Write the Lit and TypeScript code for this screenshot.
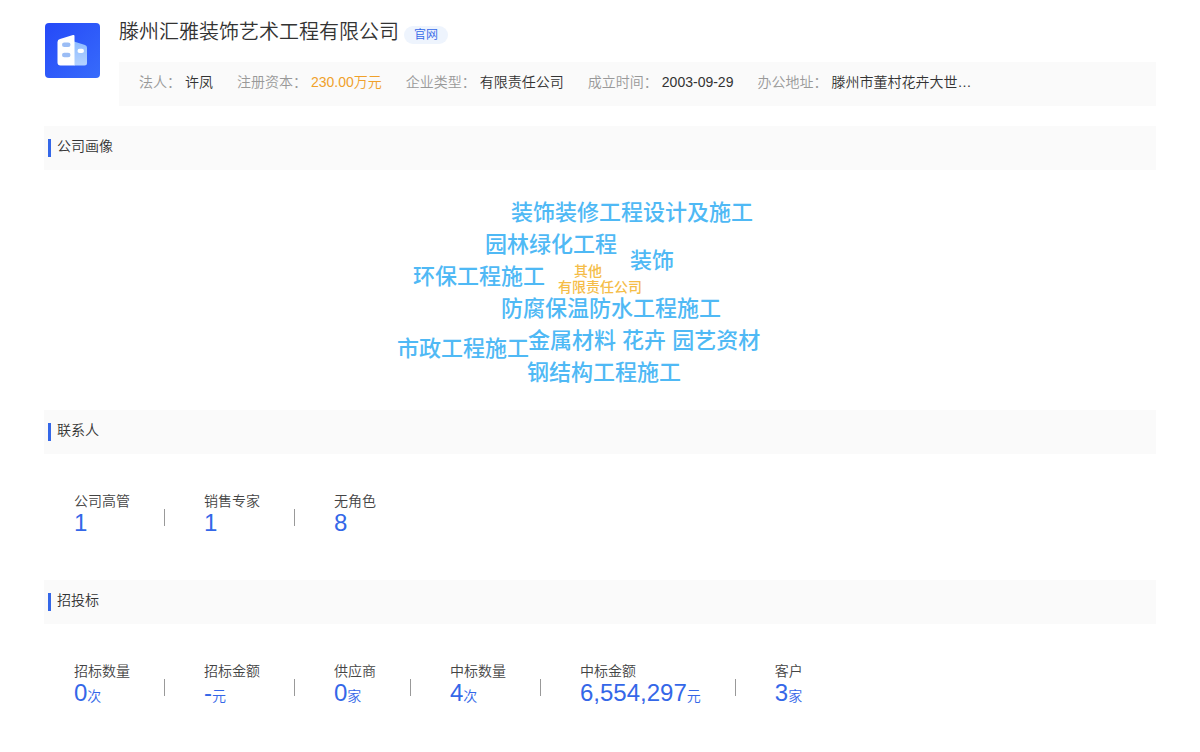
import { LitElement, html, css, svg } from "lit";
import { customElement, property } from "lit/decorators.js";
import { styleMap } from "lit/directives/style-map.js";

interface Stat {
  label: string;
  value: string;
  unit?: string;
}

interface Word {
  text: string;
  dx: number;
  y: number;
  minor?: boolean;
}

const facts = [
  { label: "法人", value: "许凤" },
  { label: "注册资本", value: "230.00万元", accent: true },
  { label: "企业类型", value: "有限责任公司" },
  { label: "成立时间", value: "2003-09-29" },
  { label: "办公地址", value: "滕州市董村花卉大世…" },
];

/* dx is measured from the middle of the cloud to the left edge of a word */
const words: Word[] = [
  { text: "装饰装修工程设计及施工", dx: -89, y: 43 },
  { text: "园林绿化工程", dx: -115, y: 75 },
  { text: "装饰", dx: 30, y: 91 },
  { text: "环保工程施工", dx: -187, y: 107 },
  { text: "其他", dx: -26, y: 101, minor: true },
  { text: "有限责任公司", dx: -42, y: 117, minor: true },
  { text: "防腐保温防水工程施工", dx: -99, y: 139 },
  { text: "金属材料 花卉 园艺资材", dx: -72, y: 171 },
  { text: "市政工程施工", dx: -203, y: 179 },
  { text: "钢结构工程施工", dx: -73, y: 203 },
];

const contacts: Stat[] = [
  { label: "公司高管", value: "1" },
  { label: "销售专家", value: "1" },
  { label: "无角色", value: "8" },
];

const bids: Stat[] = [
  { label: "招标数量", value: "0", unit: "次" },
  { label: "招标金额", value: "-", unit: "元" },
  { label: "供应商", value: "0", unit: "家" },
  { label: "中标数量", value: "4", unit: "次" },
  { label: "中标金额", value: "6,554,297", unit: "元" },
  { label: "客户", value: "3", unit: "家" },
];

const logo = svg`
  <defs>
    <linearGradient id="tile" x1="0" y1="0" x2="1" y2="1">
      <stop offset="0" stop-color="#2549f8" />
      <stop offset="1" stop-color="#376bfb" />
    </linearGradient>
    <linearGradient id="wing" x1="0" y1="0" x2="0" y2="1">
      <stop offset="0" stop-color="#8fbcff" />
      <stop offset="1" stop-color="#b4d2ff" />
    </linearGradient>
  </defs>
  <rect width="55" height="55" rx="4" fill="url(#tile)" />
  <path d="M29 18.500 L40 22 Q42 22.700 42 24.800 V40 Q42 42.500 39.500 42.500 H29 Z" fill="url(#wing)" />
  <path d="M15 16 Q12.500 16.700 12.500 19 V39.500 Q12.500 42.500 15.500 42.500 H29.500 V13 Q29.500 11.600 28 12.100 Z" fill="#fff" />
  <rect x="17" y="19.500" width="8.500" height="4.600" rx="2.300" fill="#9bbdf5" />
  <rect x="17" y="29.700" width="8.500" height="4.600" rx="2.300" fill="#9bbdf5" />
  <rect x="32.500" y="25.800" width="6.500" height="4.200" rx="2.100" fill="#fff" />
`;

@customElement("section-title")
export class SectionTitle extends LitElement {
  static styles = css`
    .bar {
      display: flex;
      align-items: center;
      gap: 6px;
      height: 44px;
      padding: 0 4px;
      background: #fafafa;
    }
    .mark {
      width: 3px;
      height: 18px;
      background: #3467e8;
    }
    .text {
      margin: 0;
      padding-bottom: 4px;
      font-size: 14px;
      line-height: 20px;
      font-weight: inherit;
      color: #333;
    }
    :host {
      display: block;
    }
  `;

  render() {
    return html`<div class="bar">
      <span class="mark"></span>
      <h2 class="text"><slot></slot></h2>
    </div>`;
  }
}

@customElement("stat-row")
export class StatRow extends LitElement {
  @property({ attribute: false }) stats: Stat[] = [];

  static styles = css`
    :host {
      display: block;
    }
    .row {
      display: flex;
      flex-wrap: wrap;
      margin: 0;
      padding: 36px 30px 40px;
    }
    .stat {
      display: flex;
      align-items: flex-start;
    }
    .stat + .stat::before {
      content: "";
      width: 1px;
      height: 17px;
      margin: 19px 39px 0 34px;
      background: #999;
    }
    .label {
      font-size: 14px;
      line-height: 22px;
      color: #444;
    }
    .value {
      margin: 0;
      padding-bottom: 6px;
      font-size: 24px;
      line-height: 22px;
      color: #3467e8;
    }
    .unit {
      font-size: 14px;
    }
  `;

  render() {
    return html`<dl class="row">
      ${this.stats.map(
        (s) => html`<div class="stat">
          <div>
            <dt class="label">${s.label}</dt>
            <dd class="value">${s.value}${s.unit ? html`<span class="unit">${s.unit}</span>` : ""}</dd>
          </div>
        </div>`
      )}
    </dl>`;
  }
}

@customElement("app-root")
export class AppRoot extends LitElement {
  static styles = css`
    :host {
      display: block;
      padding: 18px 44px 0;
      background: #fff;
      color: #333;
      font-family: "Liberation Sans", "Noto Sans CJK SC", sans-serif;
      font-size: 14px;
      font-weight: 350;
    }
    .head {
      display: flex;
      gap: 19px;
      padding-left: 1px;
      margin-bottom: 20px;
    }
    .logo {
      flex: none;
      width: 55px;
      height: 55px;
      margin-top: 5px;
    }
    .main {
      flex: 1;
      min-width: 0;
    }
    .line {
      display: flex;
      align-items: center;
      gap: 5px;
      height: 28px;
      margin-bottom: 16px;
    }
    .name {
      margin: 0;
      font-size: 20px;
      line-height: 28px;
      font-weight: inherit;
    }
    .site {
      margin-top: 6px;
      padding: 0 10px;
      border-radius: 9px;
      background: #eef4fd;
      color: #3467e8;
      font-size: 12px;
      line-height: 18px;
      text-decoration: none;
    }
    .facts {
      display: flex;
      flex-wrap: wrap;
      gap: 0 24px;
      margin: 0;
      padding: 10px 20px 14px;
      background: #fafafa;
      line-height: 20px;
    }
    .fact {
      display: flex;
      gap: 4px;
    }
    .key {
      color: #999;
    }
    .val {
      margin: 0;
    }
    .accent {
      color: #f0a12b;
    }
    .cloud {
      position: relative;
      height: 240px;
    }
    .word {
      position: absolute;
      transform: translateY(-50%);
      white-space: nowrap;
      font-size: 22px;
      line-height: 32px;
      font-weight: 500;
      color: #4fb9f5;
    }
    .minor {
      font-size: 14px;
      line-height: 16px;
      color: #f5bd48;
    }
  `;

  render() {
    return html`
      <header class="head">
        <svg class="logo" viewBox="0 0 55 55" aria-hidden="true">${logo}</svg>
        <div class="main">
          <div class="line">
            <h1 class="name">滕州汇雅装饰艺术工程有限公司</h1>
            <a class="site" href="#">官网</a>
          </div>
          <dl class="facts">
            ${facts.map(
              (f) => html`<div class="fact">
                <dt class="key">${f.label}：</dt>
                <dd class="val ${f.accent ? "accent" : ""}">${f.value}</dd>
              </div>`
            )}
          </dl>
        </div>
      </header>
      <section>
        <section-title>公司画像</section-title>
        <div class="cloud">
          ${words.map(
            (w) => html`<span
              class="word ${w.minor ? "minor" : ""}"
              style=${styleMap({ left: `calc(50% + ${w.dx}px)`, top: `${w.y}px` })}
              >${w.text}</span
            >`
          )}
        </div>
      </section>
      <section>
        <section-title>联系人</section-title>
        <stat-row .stats=${contacts}></stat-row>
      </section>
      <section>
        <section-title>招投标</section-title>
        <stat-row .stats=${bids}></stat-row>
      </section>
    `;
  }
}
